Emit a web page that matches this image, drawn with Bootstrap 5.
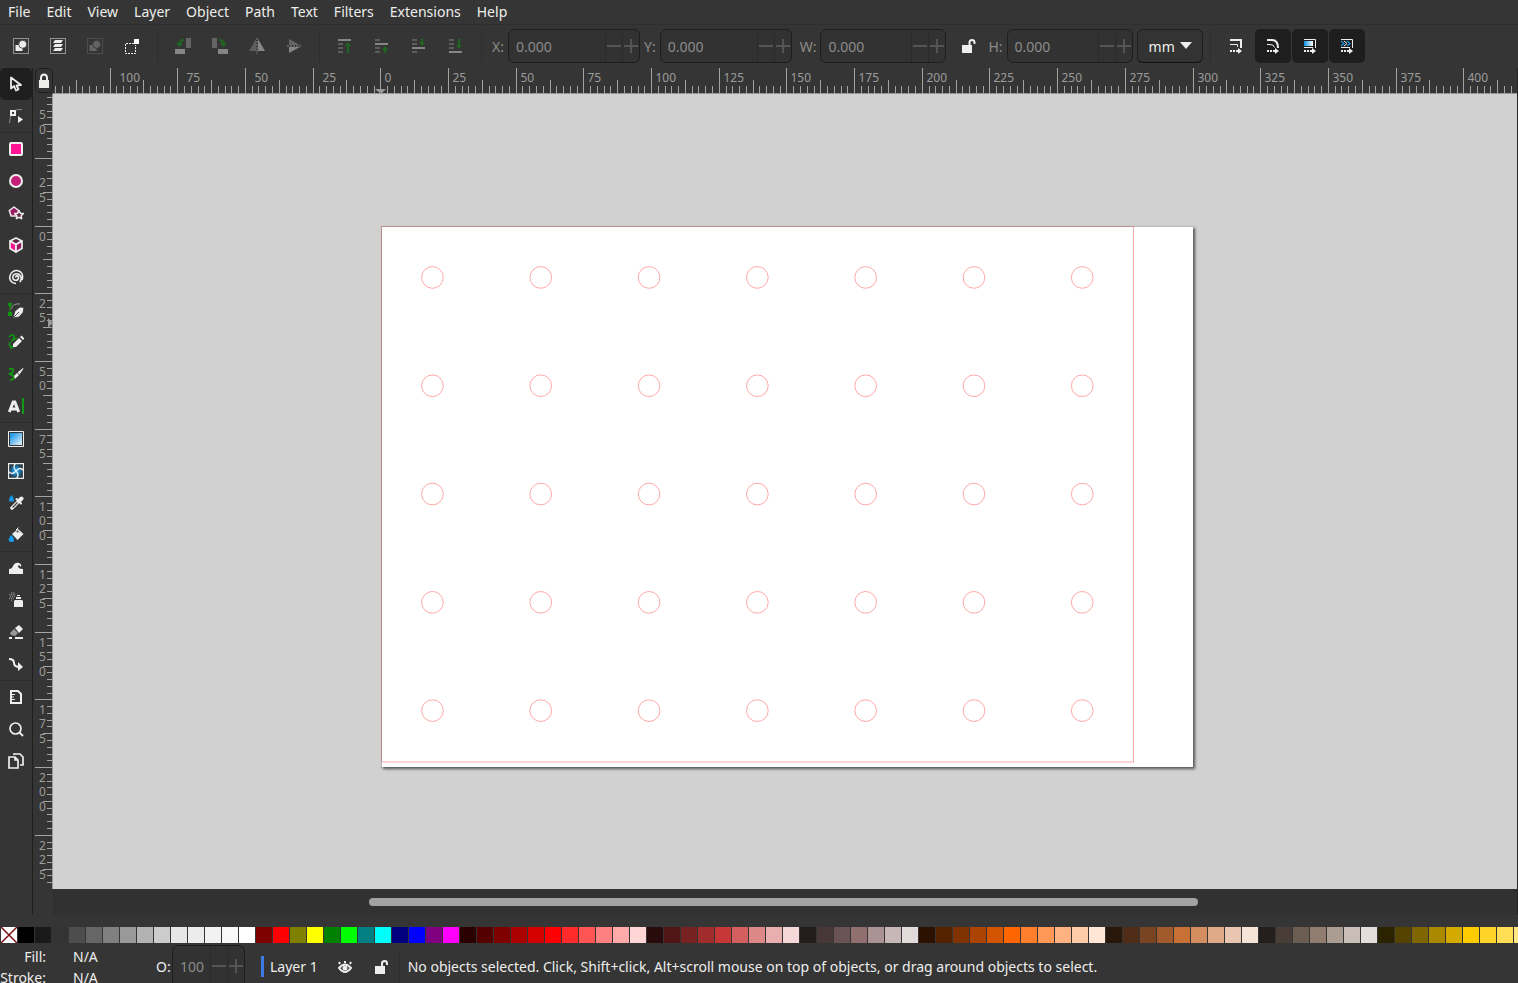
<!DOCTYPE html>
<html lang="en">
<head>
<meta charset="utf-8">
<meta name="viewport" content="width=device-width, initial-scale=1">
<title>Vector editor</title>
<link href="https://cdn.jsdelivr.net/npm/bootstrap@5.3.0/dist/css/bootstrap.min.css" rel="stylesheet">
<style>
:root{--panel:#353535;--deep:#1e1e1e;--line:#2e2e2e;--fg:#eeeeec;--dim:#8c8c8a;--desk:#d1d1d1}
body{background:var(--panel);color:var(--fg);font-family:"Noto Sans","Open Sans",sans-serif;font-size:14px;line-height:20px}
svg{display:block;flex:none}
button{color:inherit;background:none;border:0;padding:0}
.menubar{height:25px;border-bottom:1px solid var(--line)}
.menubar .nav-link{color:var(--fg);padding:2px 8px}
.toolbar{height:43px;gap:1px;padding:4px 0 5px 3px}
.tool{width:36px;height:34px;border-radius:5px;display:flex;align-items:center;justify-content:center;flex:none}
.tool.on,.side .on{background:var(--deep)}
.tool:disabled{opacity:.4}
.rule{width:1px;align-self:stretch;background:var(--line);margin:0 6px;flex:none}
.field{height:34px;width:132px;border:1px solid var(--deep);border-radius:6px;background:#323232;overflow:hidden;flex:none}
.field.slim{width:126px}
.field input{min-width:0;flex:1;background:none;border:0;color:var(--dim);padding:2px 0 0 7px;outline:0}
.field button{width:17px;border-left:1px solid #2b2b2b;color:#555;display:flex;align-items:center;justify-content:center}
.tag{color:var(--dim);text-align:right;flex:none;margin:2px 3px 0 3px}
.unit{width:66px;height:34px;position:relative;flex:none;margin-left:3px}
.unit select{width:100%;height:100%;appearance:none;background:#333;color:var(--fg);border:1px solid var(--deep);border-bottom-color:#111;border-radius:6px;padding:2px 0 0 11px}
.unit svg{position:absolute;right:11px;top:13px;pointer-events:none}
.side{width:33px;border-right:1px solid var(--deep);flex:none}
.side button{width:32px;height:32px;border-radius:5px;display:flex;align-items:center;justify-content:center;flex:none}
.side hr{margin:0;border:0;height:1px;background:var(--line);opacity:1;width:32px;flex:none}
.vcol{width:20px;flex:none}
.lockbtn{width:18px;height:25px;border:1px solid var(--deep);border-radius:5px;margin:0 0 1px 2px;display:flex;align-items:center;justify-content:center;flex:none}
.hruler{height:26px;border-bottom:1px solid #999;flex:none;overflow:hidden}
.vruler{flex:1;min-height:0;border-right:1px solid #999;margin-bottom:26px;overflow:hidden}
.ticks{stroke:#a3a3a1;stroke-width:1;shape-rendering:crispEdges;fill:none}
.nums{fill:#9c9c9a;font-size:12px}
.edge{border-right:1px solid #242424;min-height:0}
.stage{min-width:0}
.desk{background:var(--desk);flex:1;min-height:0;overflow:hidden}
.scroller{height:26px;background:#313131;padding:9px 319px 9px 316px;flex:none}
.thumb{height:8px;border-radius:4px;background:#a2a2a0}
.palette{height:16px;margin-top:12px;padding-left:1px;gap:1px;overflow:hidden;flex:none}
.palette button{width:16px;height:16px;flex:none}
.status{height:40px;padding-top:7px;overflow:hidden;flex:none}
.paint{width:100px;margin-top:-4px;line-height:21px;display:grid;grid-template-columns:46px 1fr;column-gap:27px;align-self:start;flex:none}
.opacity{width:73px;height:42px;margin-top:-5px;align-self:start}
.opl{margin:0 2px 0 56px;width:14px}
.swatchbar{width:3px;height:21px;background:#3d7ae5;margin:0 6px 0 16px;flex:none}
.layer{margin-right:9px}
</style>
</head>
<body class="vh-100 d-flex flex-column overflow-hidden">
<nav class="menubar d-flex">
  <a class="nav-link" href="#">File</a><a class="nav-link" href="#">Edit</a><a class="nav-link" href="#">View</a><a class="nav-link" href="#">Layer</a><a class="nav-link" href="#">Object</a><a class="nav-link" href="#">Path</a><a class="nav-link" href="#">Text</a><a class="nav-link" href="#">Filters</a><a class="nav-link" href="#">Extensions</a><a class="nav-link" href="#">Help</a>
</nav>

<div class="toolbar d-flex align-items-center">
  <button class="tool" aria-label="Select all"><svg width="16" height="16" fill="#eeeeec"><rect x=".5" y=".5" width="15" height="15" fill="none" stroke="#eeeeec" stroke-dasharray="1 1"/><path d="M2.500 7h7v6h-7z"/><circle cx="9.700" cy="6.300" r="4" stroke="#353535" stroke-width=".8"/></svg></button>
  <button class="tool" aria-label="Select all in all layers"><svg width="16" height="16" fill="#eeeeec"><rect x=".5" y=".5" width="15" height="15" fill="none" stroke="#eeeeec" stroke-dasharray="1 1"/><path d="M5 2h8l-2 3H3zM5 6h8l-2 3H3zM5 10h8l-2 3H3z"/></svg></button>
  <button class="tool" aria-label="Deselect" disabled><svg width="16" height="16" fill="#aaa"><rect x=".5" y=".5" width="15" height="15" fill="none" stroke="#aaa" stroke-dasharray="1 1"/><path d="M2.500 7h7v6h-7z"/><circle cx="9.700" cy="6.300" r="4" stroke="#353535" stroke-width=".8"/></svg></button>
  <button class="tool" aria-label="Toggle selection box"><svg width="16" height="16"><path d="M10 5.500H1.500v10h10V7" fill="none" stroke="#eeeeec" stroke-dasharray="2 1"/><path d="M10 1h5v5h-5z" fill="#fff"/></svg></button>
  <span class="rule"></span>
  <button class="tool" aria-label="Rotate left" disabled><svg width="16" height="16"><path fill="#aaa" d="M11 0h5v10h-5z"/><path fill="#fff" d="M0 11h10v5H0z"/><path d="M9 2Q4 2 4 7" fill="none" stroke="#00b000" stroke-width="2"/><path fill="#00b000" d="M1 5h7L4.500 9z"/></svg></button>
  <button class="tool" aria-label="Rotate right" disabled><svg width="16" height="16"><path fill="#aaa" d="M0 0h5v10H0z"/><path fill="#fff" d="M6 11h10v5H6z"/><path d="M7 2q5 0 5 5" fill="none" stroke="#00b000" stroke-width="2"/><path fill="#00b000" d="M8 5h7l-3.500 4z"/></svg></button>
  <button class="tool" aria-label="Flip horizontal" disabled><svg width="16" height="16"><path fill="#999" d="M7 1v12H0z"/><path fill="#fff" d="M9 1v12h7z"/><path d="M8 0v16" stroke="#fff" stroke-dasharray="2 1"/></svg></button>
  <button class="tool" aria-label="Flip vertical" disabled><svg width="16" height="16"><path fill="#aaa" d="M3 1v6h11z"/><path fill="#fff" d="M3 9v6l11-6z"/><path d="M1 8h15" stroke="#fff" stroke-dasharray="2 1"/></svg></button>
  <span class="rule"></span>
  <button class="tool" aria-label="Raise to top" disabled><svg width="16" height="16"><path fill="#fff" d="M1 1h13v2H1z"/><path fill="#999" d="M1 5h5v2H1zM1 9h5v2H1zM1 13h5v2H1z"/><path fill="#00b000" d="M10 15V8H8l3-4 3 4h-2v7z"/></svg></button>
  <button class="tool" aria-label="Raise" disabled><svg width="16" height="16"><path fill="#fff" d="M1 5h13v2H1z"/><path fill="#999" d="M1 1h5v2H1zM1 9h5v2H1zM1 13h5v2H1z"/><path fill="#00b000" d="M10 15v-3H8l3-4 3 4h-2v3z"/></svg></button>
  <button class="tool" aria-label="Lower" disabled><svg width="16" height="16"><path fill="#fff" d="M1 9h13v2H1z"/><path fill="#999" d="M1 1h5v2H1zM1 5h5v2H1zM1 13h5v2H1z"/><path fill="#00b000" d="M10 1v3H8l3 4 3-4h-2V1z"/></svg></button>
  <button class="tool" aria-label="Lower to bottom" disabled><svg width="16" height="16"><path fill="#fff" d="M1 13h13v2H1z"/><path fill="#999" d="M1 1h5v2H1zM1 5h5v2H1zM1 9h5v2H1z"/><path fill="#00b000" d="M10 1v6H8l3 4 3-4h-2V1z"/></svg></button>
  <span class="rule"></span>
  <label class="tag" for="fx">X:</label>
  <div class="field d-flex"><input id="fx" value="0.000"><button aria-label="Decrease"><svg width="14" height="14" stroke="#555" stroke-width="2"><path d="M0 7h14"/></svg></button><button aria-label="Increase"><svg width="14" height="14" stroke="#555" stroke-width="2"><path d="M0 7h14M7 0v14"/></svg></button></div>
  <label class="tag" for="fy">Y:</label>
  <div class="field d-flex"><input id="fy" value="0.000"><button aria-label="Decrease"><svg width="14" height="14" stroke="#555" stroke-width="2"><path d="M0 7h14"/></svg></button><button aria-label="Increase"><svg width="14" height="14" stroke="#555" stroke-width="2"><path d="M0 7h14M7 0v14"/></svg></button></div>
  <label class="tag ps-1" for="fw">W:</label>
  <div class="field slim d-flex"><input id="fw" value="0.000"><button aria-label="Decrease"><svg width="14" height="14" stroke="#555" stroke-width="2"><path d="M0 7h14"/></svg></button><button aria-label="Increase"><svg width="14" height="14" stroke="#555" stroke-width="2"><path d="M0 7h14M7 0v14"/></svg></button></div>
  <button class="tool ms-1" aria-label="Lock ratio"><svg width="16" height="16"><path fill="#eeeeec" d="M1 7h10v8H1z"/><path d="M8.500 8V4.500a2.500 2.500 0 0 1 5 0V6" fill="none" stroke="#eeeeec" stroke-width="2"/></svg></button>
  <label class="tag ms-0" for="fh">H:</label>
  <div class="field slim d-flex"><input id="fh" value="0.000"><button aria-label="Decrease"><svg width="14" height="14" stroke="#555" stroke-width="2"><path d="M0 7h14"/></svg></button><button aria-label="Increase"><svg width="14" height="14" stroke="#555" stroke-width="2"><path d="M0 7h14M7 0v14"/></svg></button></div>
  <div class="unit"><select aria-label="Unit"><option>mm</option></select><svg width="12" height="7"><path fill="#eeeeec" d="M0 0h12L6 7z"/></svg></div>
  <span class="rule"></span>
  <button class="tool" aria-label="Scale stroke"><svg width="16" height="16" fill="none" stroke="#eeeeec"><path d="M2 2h11v8" stroke-width="2"/><path d="M2 6.500h7.500V9"/><path d="M2 13h9" stroke-width="2" stroke-dasharray="2 1"/><path fill="#eeeeec" stroke="none" d="M10 10l4 3-4 3z"/></svg></button>
  <button class="tool on" aria-label="Scale corners"><svg width="16" height="16" fill="none" stroke="#eeeeec"><path d="M2 2h5q6 0 6 8" stroke-width="2"/><path d="M2 6.500h3q4 0 4.500 3"/><path d="M2 13h9" stroke-width="2" stroke-dasharray="2 1"/><path fill="#eeeeec" stroke="none" d="M10 10l4 3-4 3z"/></svg></button>
  <button class="tool on" aria-label="Move gradients"><svg width="16" height="16" fill="none" stroke="#eeeeec"><defs><linearGradient id="gh"><stop stop-color="#0a8ee0"/><stop offset="1" stop-color="#fff"/></linearGradient></defs><path fill="url(#gh)" stroke="none" d="M2 3h9v5H2z"/><path d="M2 1.500h11.500V10M2 9.500h9"/><path d="M2 13h9" stroke-width="2" stroke-dasharray="2 1"/><path fill="#eeeeec" stroke="none" d="M10 10l4 3-4 3z"/></svg></button>
  <button class="tool on" aria-label="Move patterns"><svg width="16" height="16" fill="none" stroke="#eeeeec"><path d="M2 1.500h11.500V10M2 9.500h9"/><path stroke="#1693dd" stroke-width="1.300" d="M2 3l3 2.500L2 8M8 3l3 2.500L8 8"/><path d="M5 3l3 2.500L5 8"/><path d="M2 13h9" stroke-width="2" stroke-dasharray="2 1"/><path fill="#eeeeec" stroke="none" d="M10 10l4 3-4 3z"/></svg></button>
</div>

<main class="d-flex flex-grow-1 edge">
  <div class="side d-flex flex-column overflow-hidden">
    <button class="on" aria-label="Selector"><svg width="16" height="16"><path d="M3 1.500v11l3-2.500 2 4.500 2.500-1L8.500 9.500 13 9z" fill="none" stroke="#eeeeec" stroke-width="1.800" stroke-linejoin="round"/></svg></button>
    <button aria-label="Node"><svg width="16" height="16"><path d="M1.500 15Q2 9 4 5M6 3Q9 1 14 1.500" fill="none" stroke="#8a8a88"/><path d="M3 3h4v4H3z" fill="none" stroke="#eeeeec" stroke-width="2"/><path d="M10 8v7l5-3.500z" fill="#eeeeec"/></svg></button>
    <hr>
    <button aria-label="Rectangle"><svg width="16" height="16"><rect x="2" y="2" width="12" height="12" rx="1" fill="#ff1493" stroke="#eeeeec" stroke-width="2"/></svg></button>
    <button aria-label="Ellipse"><svg width="16" height="16"><circle cx="8" cy="8" r="6" fill="#c5207a" stroke="#eeeeec" stroke-width="2"/></svg></button>
    <button aria-label="Star"><svg width="16" height="16" stroke="#eeeeec" stroke-width="1.500" stroke-linejoin="round"><path d="M6 2l4.700 3.500-1.800 5.500H3.100L1.300 5.500z" fill="#9a1c62"/><path d="M11 5.500l1.300 2.700 3 .4-2.200 2.100.5 3L11 12.300l-2.600 1.400.5-3L6.700 8.600l3-.4z" fill="#5d2445"/></svg></button>
    <button aria-label="3D box"><svg width="16" height="16" stroke="#eeeeec" stroke-width="1.700" stroke-linejoin="round"><path d="M8 1l6 3-6 3.500L2 4z" fill="#5d2445"/><path d="M2 4l6 3.500V15l-6-3.500z" fill="#ff1493"/><path d="M14 4L8 7.500V15l6-3.500z" fill="#a01c66"/></svg></button>
    <button aria-label="Spiral"><svg width="16" height="16"><path d="M8 8.500C7 6 11 6.500 10.500 9 10 12 5 12 4.800 8.500 4.800 5 8.500 3.800 11 5.500c3 2 2.500 5.500.8 7.500M8 14.500C3.500 14.500 1.300 11 1.800 7.500 2.500 3 6.500 1 10 1.700c4 .8 5.500 5 4 9.300" fill="none" stroke="#eeeeec" stroke-width="1.600"/></svg></button>
    <hr>
    <button aria-label="Pen"><svg width="16" height="16"><path d="M2 13V3" stroke="#109810"/><circle cx="2" cy="2.500" r="2" fill="#109810"/><path fill="#109810" d="M0 10h4v4H0z"/><path d="M3 7Q5 1 12 2" fill="none" stroke="#999"/><path d="M5 16l2-7 5-4 4 .5-1 5L11 15zM6 15l5-5" fill="#eeeeec" stroke="#353535" stroke-width=".8"/></svg></button>
    <button aria-label="Pencil"><svg width="16" height="16"><path d="M1 3q4-4 5-1T3 7q5-3 6-3M2 8q-2 4 2 5" fill="none" stroke="#109810" stroke-width="1.500"/><path d="M5 10l6-6 3 3-6 6H5zM12 3l1.500-1.500 3 3L15 6z" fill="#eeeeec"/><path d="M3 11l3 3-4 1z" fill="#109810"/></svg></button>
    <button aria-label="Calligraphy"><svg width="16" height="16"><path d="M1 3q5-1 4 2T2 8q2 2 4 1M2 14q4 0 4-4" fill="none" stroke="#109810" stroke-width="1.800"/><path d="M6 10l3-3 2 2-4 4zM9.500 6.500L15 2l.5.500-4 6z" fill="#eeeeec"/></svg></button>
    <button aria-label="Text"><svg width="16" height="16"><path fill="none" stroke="#eeeeec" stroke-width="3" d="M1.300 14L5.200 4h1.600l3.900 10M3 11h6"/><path fill="#109810" d="M14 0h2v16h-2z"/></svg></button>
    <hr>
    <button aria-label="Gradient"><svg width="16" height="16"><defs><linearGradient id="gd" x2="1" y2="1"><stop offset=".2" stop-color="#259be5"/><stop offset="1" stop-color="#fff"/></linearGradient></defs><path fill="url(#gd)" d="M1 1h14v14H1z"/><path d="M.5.500h15v15H.5z" fill="none" stroke="#eeeeec"/><path d="M1.500 1.500h13v13h-13z" fill="none" stroke="#333"/></svg></button>
    <button aria-label="Mesh"><svg width="16" height="16"><defs><radialGradient id="gm"><stop offset=".3" stop-color="#129bee"/><stop offset="1" stop-color="#293a45"/></radialGradient></defs><path fill="url(#gm)" d="M1 1h14v14H1z"/><path d="M.5.500h15v15H.5zM8 8Q4 4 8 0M8 8q4 4 0 8M8 8q4-5 8 0M8 8q-4 5-8 0" fill="none" stroke="#eeeeec" stroke-width="1.300"/></svg></button>
    <button aria-label="Dropper"><svg width="16" height="16"><path d="M3.500 0Q7 4 5.500 6.500h-4Q0 4 3.500 0z" fill="#129bee"/><path d="M4 13l6-6" stroke="#eeeeec" stroke-width="3.500" stroke-linecap="round"/><path d="M4.500 12.500l5-5" stroke="#444" stroke-width="1.200"/><path d="M8.500 4l4.500 4.500" stroke="#eeeeec" stroke-width="2" stroke-linecap="round"/><path d="M11.500 5.500l2-2" stroke="#eeeeec" stroke-width="4" stroke-linecap="round"/></svg></button>
    <button aria-label="Paint bucket"><svg width="16" height="16"><path d="M4 7l6-5 5.500 5-6 6z" fill="#eeeeec"/><path d="M7 5.800h5.500L9.500 3zM8 3l2.500-2.500" fill="#353535" stroke="#eeeeec"/><path d="M3.300 8q4 4 2 7h-3.500Q-1 12 3.300 8z" fill="#129bee"/></svg></button>
    <hr>
    <button aria-label="Tweak"><svg width="16" height="16"><path d="M1 14V9q3 0 4-3 2-4 6-3 3 1 2 4-2-3-3-1 0 3 5 3v5z" fill="#eeeeec"/></svg></button>
    <button aria-label="Spray"><svg width="16" height="16"><path d="M6 15V9l1-1h7l1 1v6zM8 5h5v2H8zM9 3h3v1H9z" fill="#eeeeec"/><path d="M1 2.500h7M2 4.500h5M1 6.500h5M3 8.500h1M3 .8h4" stroke="#888" stroke-width="1.300" stroke-dasharray="1.200 1"/></svg></button>
    <button aria-label="Eraser"><svg width="16" height="16"><path d="M7 4l4-3 4 4-4 4z" fill="#eeeeec"/><path d="M6 5l4 4-3 3-4-1-1-2z" fill="#999"/><path d="M1 13h3v2H1zM7 13h8v2H7z" fill="#eeeeec"/></svg></button>
    <button aria-label="Connector"><svg width="16" height="16"><path d="M1 3q5 0 5 4t6 4" fill="none" stroke="#eeeeec" stroke-width="2"/><path d="M10 6l5 5-5 4z" fill="#eeeeec"/></svg></button>
    <hr>
    <button aria-label="Measure"><svg width="16" height="16"><path d="M3 2h7l3 3v9H3z" fill="none" stroke="#eeeeec" stroke-width="2"/><path d="M3 5.500h4M3 8h3M3 10.500h4" stroke="#eeeeec" stroke-width="1"/></svg></button>
    <button aria-label="Zoom"><svg width="16" height="16"><circle cx="7.500" cy="7.500" r="5.500" fill="none" stroke="#eeeeec" stroke-width="1.700"/><path d="M11.500 11.500l3.500 3.500" stroke="#eeeeec" stroke-width="2"/></svg></button>
    <button aria-label="Pages"><svg width="16" height="16" fill="none" stroke="#eeeeec" stroke-width="1.700"><path d="M1 4h6l3 3v8H1z"/><path d="M6 2V1h6l3 3v8h-3M7 4v3h3"/></svg></button>
  </div>
  <div class="vcol d-flex flex-column">
    <button class="lockbtn" aria-label="Lock guides"><svg width="12" height="16"><path fill="#eeeeec" d="M1 7h10v8H1z"/><path d="M3 8V5q0-3.500 3-3.500T9 5v3" fill="none" stroke="#eeeeec" stroke-width="2"/></svg></button>
    <div class="vruler"><svg id="vr" width="19" height="100%"></svg></div>
  </div>
  <div class="stage d-flex flex-column flex-grow-1">
    <div class="hruler"><svg id="hr" width="100%" height="25"></svg></div>
    <div class="desk"><svg id="art" width="100%" height="100%"></svg></div>
    <div class="scroller"><div class="thumb"></div></div>
  </div>
</main>

<div class="palette d-flex" id="palette"></div>

<footer class="status d-flex align-items-center">
  <div class="paint"><span class="text-end">Fill:</span><span>N/A</span><span class="text-end">Stroke:</span><span>N/A</span></div>
  <label class="opl" for="op">O:</label>
  <div class="field opacity d-flex"><input id="op" value="100"><button aria-label="Decrease"><svg width="14" height="14" stroke="#555" stroke-width="2"><path d="M0 7h14"/></svg></button><button aria-label="Increase"><svg width="14" height="14" stroke="#555" stroke-width="2"><path d="M0 7h14M7 0v14"/></svg></button></div>
  <span class="swatchbar"></span>
  <button class="layer">Layer 1</button>
  <button class="tool" aria-label="Toggle visibility"><svg width="16" height="16" fill="none" stroke="#eeeeec" stroke-width="2"><path d="M2 9q6-7 12 0-6 8-12 0zM3 5L2 3M8 4V2M13 5l1-2"/><circle cx="8" cy="9" r="1.500" fill="#eeeeec"/></svg></button>
  <button class="tool" aria-label="Lock layer"><svg width="16" height="16"><path fill="#eeeeec" d="M2 7h10v8H2z"/><path d="M9 8V4.500a2.500 2.500 0 0 1 5 0V6" fill="none" stroke="#eeeeec" stroke-width="2"/></svg></button>
  <span class="rule mx-0"></span>
  <span class="flex-grow-1 text-nowrap ps-2">No objects selected. Click, Shift+click, Alt+scroll mouse on top of objects, or drag around objects to select.</span>
</footer>

<script src="https://cdn.jsdelivr.net/npm/bootstrap@5.3.0/dist/js/bootstrap.bundle.min.js"></script>
<script>
// Document scale and the page origin inside the canvas
const mm = 2.7075, ox = 327.3, oy = 131.6;
const hr = document.getElementById('hr'), vr = document.getElementById('vr');
const art = document.getElementById('art'), palette = document.getElementById('palette');
const width = hr.getBoundingClientRect().width, height = vr.getBoundingClientRect().height;

// Horizontal ruler: a tick each 2.5 mm, a label each 25 mm
let d = '', t = '';
for (let i = -60; i <= 2000; i++) {
  const x = Math.round(ox + i * 2.5 * mm) + .5;
  if (x < 0) continue;
  if (x > width) break;
  d += `M${x} ${i % 10 === 0 ? 0 : i % 5 === 0 ? 12 : 18}V25`;
  if (i % 10 === 0) t += `<text x="${x + (i < 0 ? 9 : 4)}" y="14">${Math.abs(i * 2.5)}</text>`;
}
hr.innerHTML = `<path class="ticks" d="${d}"/><g class="nums">${t}</g><path fill="#999" d="M322 21h11l-5 5z"/>`;

// Vertical ruler: digits of each label are stacked
d = t = '';
for (let i = -20; i <= 2000; i++) {
  const y = Math.round(oy + i * 2.5 * mm) + .5;
  if (y > height - 4) break;
  if (y > 0) d += `M${i % 10 === 0 ? 2 : i % 5 === 0 ? 10 : 14} ${y}H19`;
  if (i % 10 === 0) [...String(Math.abs(i * 2.5))].forEach((c, k) => {
    t += `<text x="6" y="${Math.round(y + 14 + (k + (i < 0 ? 1 : 0)) * 14.5)}">${c}</text>`;
  });
}
vr.innerHTML = `<path class="ticks" d="${d}"/><g class="nums">${t}</g><path fill="#999" d="M15 224v10l5-5z"/>`;

// Page with its cut outline and the grid of holes
let holes = '';
for (let r = 0; r < 5; r++) for (let c = 0; c < 7; c++)
  holes += `<circle cx="${328 + (19 + 40 * c) * mm}" cy="${132 + (19 + 40 * r) * mm}" r="${4 * mm}"/>`;
art.innerHTML = `<defs><filter id="sh" x="-5%" y="-5%" width="110%" height="110%"><feDropShadow dx="2" dy="2" stdDeviation="1.5" flood-opacity=".6"/></filter></defs>
<rect x="328" y="132" width="812" height="541" fill="#fff" filter="url(#sh)"/>
<g fill="none" stroke="#ff0000" stroke-opacity=".34"><rect x="328.5" y="132.5" width="752" height="535.5"/>${holes}</g>
<path d="M328.500 674V132.500H1140" fill="none" stroke="#777" stroke-opacity=".5"/>`;

const colors = ('000000 1a1a1a 333333 4d4d4d 666666 808080 999999 b3b3b3 cccccc e6e6e6 ececec f2f2f2 f9f9f9 ffffff 800000 ff0000 808000 ffff00 008000 00ff00 008080 00ffff 000080 0000ff 800080 ff00ff ' +
 '2b0000 550000 800000 aa0000 d40000 ff0000 ff2a2a ff5555 ff8080 ffaaaa ffd5d5 280b0b 501616 782121 a02c2c c83737 d35f5f de8787 e9afaf f4d7d7 241c1c 483737 6c5353 916f6f ac9393 c8b7b7 e3dbdb ' +
 '2b1100 552200 803300 aa4400 d45500 ff6600 ff7f2a ff9955 ffb380 ffccaa ffe6d5 28170b 502d16 784421 a05a2c c87137 d38d5f deaa87 e9c6af f4e3d7 241f1c 483e37 6c5d53 917c6f ac9d93 c8beb7 e3dedb ' +
 '2b2200 554400 806600 aa8800 d4aa00 ffcc00 ffd42a ffdd55 ffe680').split(' ');
palette.innerHTML = '<button aria-label="None"><svg width="16" height="16"><path fill="#fff" d="M0 0h16v16H0z"/><path d="M0 0l16 16M16 0L0 16" stroke="#7a1010" stroke-width="1.500"/></svg></button>' +
  colors.map(c => `<button aria-label="#${c}" style="background:#${c}"></button>`).join('');
</script>
</body>
</html>
